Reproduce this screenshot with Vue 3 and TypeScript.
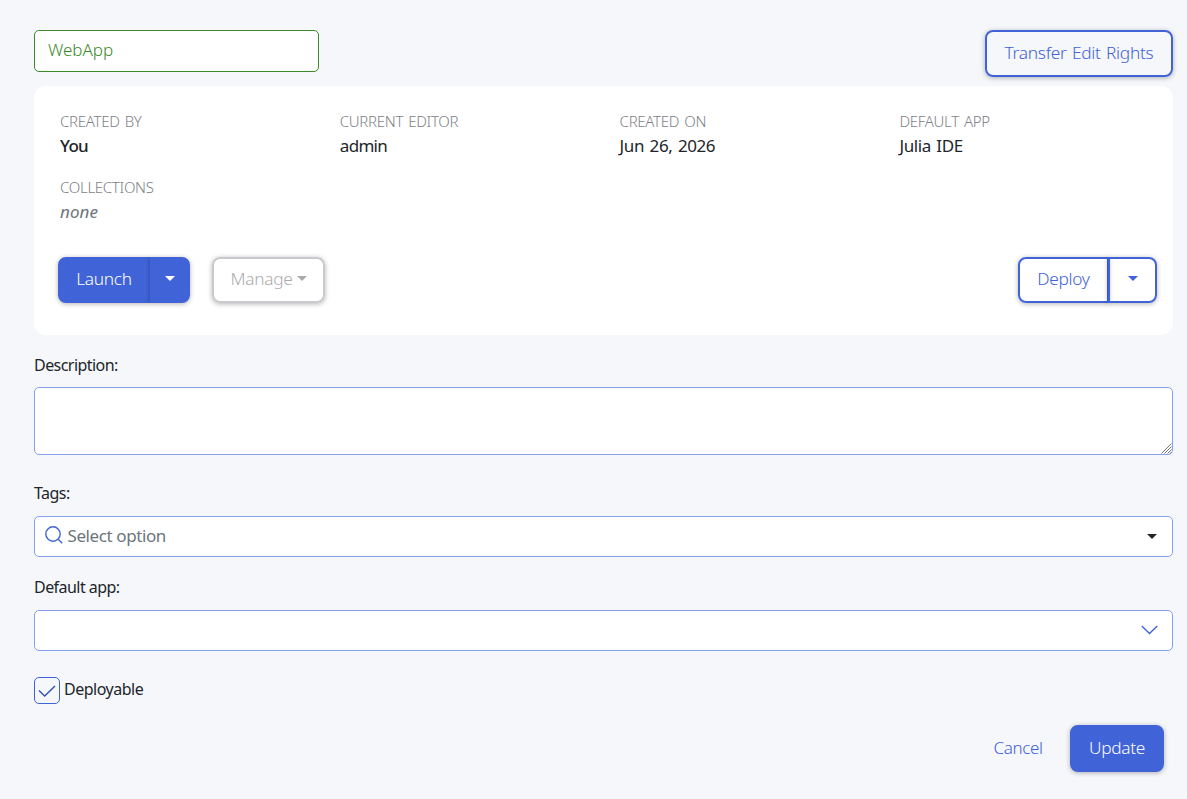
<script setup lang="ts">
import { ref } from 'vue'

interface Detail {
  label: string
  value: string
  kind?: string
}

const name = ref('WebApp')
const description = ref('')
const deployable = ref(true)
const details: Detail[] = [
  { label: 'CREATED BY', value: 'You', kind: 'strong' },
  { label: 'CURRENT EDITOR', value: 'admin', kind: 'editor' },
  { label: 'CREATED ON', value: 'Jun 26, 2026' },
  { label: 'DEFAULT APP', value: 'Julia IDE' },
  { label: 'COLLECTIONS', value: 'none', kind: 'empty' },
]
</script>

<template>
  <main class="page">
    <header class="top">
      <input v-model="name" class="name" type="text" aria-label="Name" />
      <button class="btn outline transfer">Transfer Edit Rights</button>
    </header>

    <section class="card">
      <dl class="details">
        <div v-for="d in details" :key="d.label" class="detail">
          <dt>{{ d.label }}</dt>
          <dd :class="d.kind">{{ d.value }}</dd>
        </div>
      </dl>
      <div class="actions">
        <div class="group">
          <button class="btn solid launch">Launch</button>
          <button class="btn solid launch-more" aria-label="More launch options"><i class="caret"></i></button>
        </div>
        <button class="btn outline manage" disabled>Manage<i class="caret"></i></button>
        <div class="group deploy-group">
          <button class="btn outline deploy">Deploy</button>
          <button class="btn outline deploy-more" aria-label="More deploy options"><i class="caret"></i></button>
        </div>
      </div>
    </section>

    <label class="label l-desc" for="description">Description:</label>
    <div class="area-wrap">
      <textarea id="description" v-model="description" class="field area"></textarea>
      <svg class="grip" viewBox="0 0 11 11" width="11" height="11">
        <path d="M.5 10.5 10.5 .5M3.5 10.5 10.5 3.5M6.5 10.5 10.5 6.5M9 10.5 10.5 9" />
      </svg>
    </div>

    <div class="label l-tags">Tags:</div>
    <div class="field select">
      <svg class="search" viewBox="0 0 18 18" width="18" height="18">
        <circle cx="8" cy="8" r="7.2" />
        <path d="M13.2 13.2 17.2 17.2" />
      </svg>
      <span class="placeholder">Select option</span>
      <i class="caret dark"></i>
    </div>

    <div class="label l-app">Default app:</div>
    <div class="field select">
      <svg class="chevron" viewBox="0 0 17 10" width="17" height="10">
        <path d="M.8 1 8.5 8.5 16.2 1" />
      </svg>
    </div>

    <label class="check">
      <input v-model="deployable" type="checkbox" />
      <span class="box">
        <svg v-if="deployable" viewBox="0 0 18 12" width="18" height="12">
          <path d="M1 5.5 6.7 11 17 1" />
        </svg>
      </span>
      <span class="check-text">Deployable</span>
    </label>

    <footer class="bottom">
      <button class="cancel">Cancel</button>
      <button class="btn solid update">Update</button>
    </footer>
  </main>
</template>

<style>
body {
  margin: 0;
  background: #f5f7fb;
}
</style>

<style scoped>
.page {
  box-sizing: border-box;
  height: 799px;
  padding: 30px 14px 0 34px;
  color: #212529;
  font: 400 17px/24px "Noto Sans", "Open Sans", sans-serif;
  letter-spacing: -0.4px;
}
.page * {
  box-sizing: border-box;
}
button,
input,
textarea {
  margin: 0;
  font: inherit;
  letter-spacing: inherit;
}
.top {
  display: flex;
  justify-content: space-between;
  align-items: flex-start;
  height: 56px;
}
.name {
  width: 285px;
  height: 42px;
  padding: 0 13px 4px;
  border: 1px solid #3a8a2a;
  border-radius: 5px;
  background: #fff;
  color: #3a8a2a;
  font-weight: 300;
  letter-spacing: 0;
  outline: none;
}
.btn {
  display: flex;
  align-items: center;
  justify-content: center;
  height: 46px;
  padding: 0 0 2px;
  border: 2px solid #4063d8;
  border-radius: 8px;
  font-size: 17.3px;
  font-weight: 300;
  letter-spacing: -0.3px;
  box-shadow: 0 1px 5px rgba(0, 0, 0, 0.3);
  white-space: nowrap;
}
.outline {
  background: transparent;
  color: #4063d8;
}
.solid {
  background: #4063d8;
  color: #fff;
}
.transfer {
  width: 188px;
  height: 47px;
  word-spacing: 1px;
  letter-spacing: -0.25px;
}
.card {
  height: 249px;
  padding: 24px 16px 0 24px;
  border-radius: 12px;
  background: #fff;
}
.details {
  display: grid;
  grid-template-columns: repeat(4, 279.8px);
  row-gap: 18px;
  margin: 0;
  padding-left: 2px;
}
.detail {
  height: 48px;
}
dt {
  height: 24px;
  color: #7e7f86;
  font-size: 15px;
  font-weight: 300;
  line-height: 23px;
  letter-spacing: -0.3px;
  word-spacing: 1.5px;
}
dd {
  margin: 0;
  height: 24px;
  word-spacing: 1.5px;
}
.strong {
  font-weight: 500;
  letter-spacing: -0.7px;
}
.editor {
  letter-spacing: -0.7px;
}
.empty {
  color: #6c757d;
  font-style: italic;
  letter-spacing: 0.1px;
}
.actions {
  display: flex;
  margin-top: 33px;
}
.group {
  display: flex;
}
.launch {
  width: 92px;
  border-radius: 8px 0 0 8px;
}
.launch-more {
  width: 40px;
  border-radius: 0 8px 8px 0;
}
.manage {
  width: 113px;
  margin-left: 22px;
  border-color: #c9c9ce;
  color: #ababae;
}
.manage .caret {
  margin-left: 4px;
}
.deploy-group {
  margin-left: auto;
}
.deploy {
  width: 91px;
  border-radius: 8px 0 0 8px;
}
.deploy-more {
  width: 49px;
  margin-left: -1px;
  border-radius: 0 8px 8px 0;
}
.caret {
  width: 0;
  height: 0;
  margin-bottom: 1px;
  border: 5px solid transparent;
  border-top-color: currentColor;
  border-bottom: 0;
}
.label {
  display: block;
  height: 24px;
  font-size: 16px;
  letter-spacing: -0.55px;
}
.l-desc {
  margin: 18px 0 10px;
}
.l-tags {
  margin: 26px 0 11px;
}
.l-app {
  margin: 18px 0 11px;
}
.field {
  display: flex;
  align-items: center;
  width: 100%;
  border: 1px solid #86a0f0;
  border-radius: 5px;
  background: #fff;
}
.area-wrap {
  position: relative;
}
.area {
  display: block;
  height: 68px;
  outline: none;
  resize: none;
}
.select {
  height: 41px;
  padding: 0 15px 0 10px;
}
svg {
  flex: none;
  fill: none;
  stroke: #4063d8;
  stroke-width: 1.4;
}
.grip {
  position: absolute;
  right: 1px;
  bottom: 1px;
  stroke: #777;
  stroke-width: 1;
}
.search {
  margin: 0 5px 3px -0.5px;
}
.placeholder {
  margin-bottom: 2px;
  color: #6c757d;
  letter-spacing: -0.4px;
}
.dark {
  margin: 0 0 0 auto;
}
.chevron {
  margin: 0 -1px 1px auto;
}
.check {
  display: flex;
  width: 200px;
  height: 27px;
  margin-top: 26px;
}
.check input {
  position: absolute;
  opacity: 0;
}
.box {
  display: flex;
  align-items: center;
  justify-content: center;
  width: 26px;
  height: 27px;
  border: 1px solid #4063d8;
  border-radius: 5px;
}
.box svg {
  stroke: #2f4fb8;
}
.check-text {
  margin-left: 4px;
  font-size: 16px;
  letter-spacing: -0.5px;
}
.bottom {
  display: flex;
  justify-content: flex-end;
  align-items: center;
  margin: 21px 9px 0 0;
}
.cancel {
  width: 50px;
  margin-right: 27px;
  padding: 0 0 2px;
  border: 0;
  background: none;
  color: #4063d8;
  font-weight: 300;
  letter-spacing: -0.35px;
}
.update {
  width: 94px;
  height: 47px;
}
</style>
